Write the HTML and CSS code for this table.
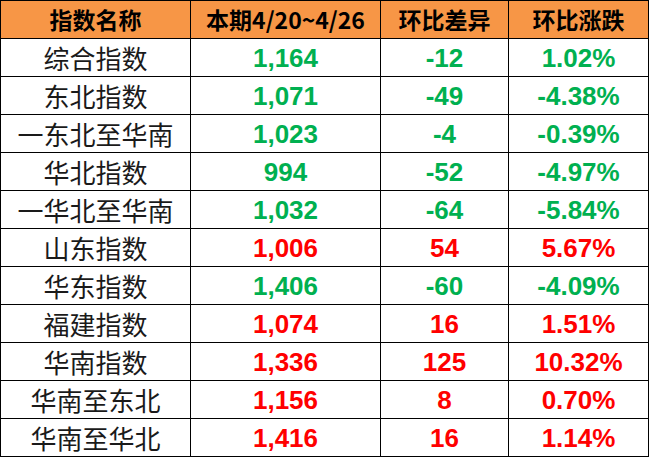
FILE: index.html
```html
<!DOCTYPE html>
<html lang="zh-CN">
<head>
<meta charset="utf-8">
<title>指数</title>
<link rel="stylesheet" href="styles.css">
</head>
<body>
<table class="grid">
  <colgroup>
    <col class="c1"><col class="c2"><col class="c3"><col class="c4">
  </colgroup>
  <thead>
    <tr class="head"><th>指数名称</th><th>本期4/20~4/26</th><th>环比差异</th><th>环比涨跌</th></tr>
  </thead>
  <tbody>
    <tr class="up"><td class="name">综合指数</td><td class="num">1,164</td><td class="num">-12</td><td class="num">1.02%</td></tr>
    <tr class="up"><td class="name">东北指数</td><td class="num">1,071</td><td class="num">-49</td><td class="num">-4.38%</td></tr>
    <tr class="up"><td class="name">一东北至华南</td><td class="num">1,023</td><td class="num">-4</td><td class="num">-0.39%</td></tr>
    <tr class="up"><td class="name">华北指数</td><td class="num">994</td><td class="num">-52</td><td class="num">-4.97%</td></tr>
    <tr class="up"><td class="name">一华北至华南</td><td class="num">1,032</td><td class="num">-64</td><td class="num">-5.84%</td></tr>
    <tr class="down"><td class="name">山东指数</td><td class="num">1,006</td><td class="num">54</td><td class="num">5.67%</td></tr>
    <tr class="up"><td class="name">华东指数</td><td class="num">1,406</td><td class="num">-60</td><td class="num">-4.09%</td></tr>
    <tr class="down"><td class="name">福建指数</td><td class="num">1,074</td><td class="num">16</td><td class="num">1.51%</td></tr>
    <tr class="down"><td class="name">华南指数</td><td class="num">1,336</td><td class="num">125</td><td class="num">10.32%</td></tr>
    <tr class="down"><td class="name">华南至东北</td><td class="num">1,156</td><td class="num">8</td><td class="num">0.70%</td></tr>
    <tr class="down"><td class="name">华南至华北</td><td class="num">1,416</td><td class="num">16</td><td class="num">1.14%</td></tr>
  </tbody>
</table>
</body>
</html>
```
FILE: styles.css
```css
html, body {
  margin: 0;
  padding: 0;
  background: #ffffff;
}
.grid {
  border-collapse: collapse;
  table-layout: fixed;
  width: 648px;
}
.c1 { width: 190px; }
.c2 { width: 190px; }
.c3 { width: 128px; }
.c4 { width: 140px; }
.grid th,
.grid td {
  border: 1px solid #000000;
  height: 37px;
  padding: 0;
  text-align: center;
  vertical-align: middle;
  white-space: nowrap;
  overflow: hidden;
}
.head th {
  background: #f79646;
  color: #000000;
  font-family: "Noto Sans CJK SC", sans-serif;
  font-weight: 700;
  font-size: 23px;
  line-height: 37px;
}
.name {
  font-family: "Noto Sans CJK SC", sans-serif;
  font-size: 26px;
  color: #1a1a1a;
  line-height: 37px;
}
.num {
  font-family: "Liberation Sans", "Noto Sans CJK SC", sans-serif;
  font-weight: 700;
  font-size: 26px;
  padding-top: 3px;
  height: 34px;
  line-height: 34px;
}
.up .num { color: #00b050; }
.down .num { color: #ff0000; }
```
